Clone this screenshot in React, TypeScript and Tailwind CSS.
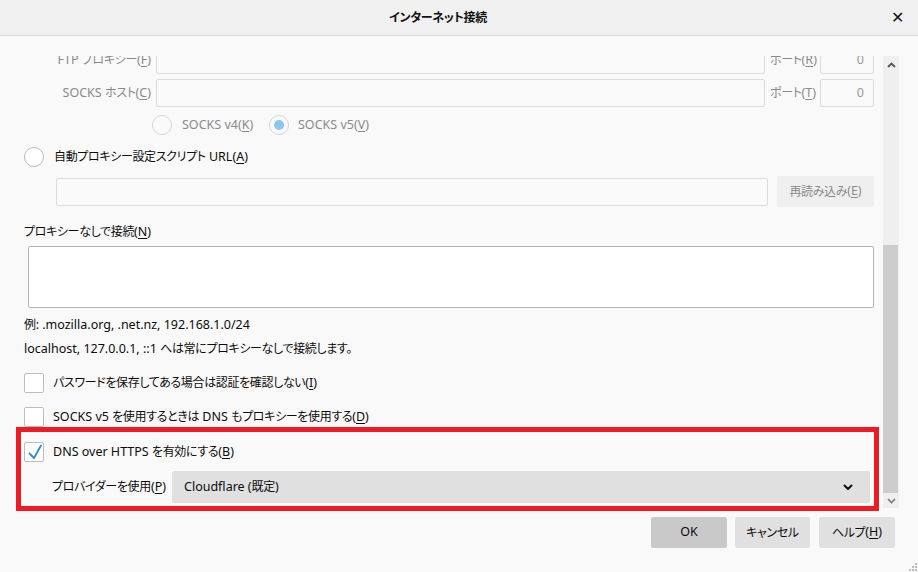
import React from "react";

const font = { fontFamily: '"Noto Sans", "Noto Sans CJK JP", sans-serif' };

function M({ c }: { c: string }) {
  return (
    <>
      (<u className="underline-offset-2">{c}</u>)
    </>
  );
}

function J({ children }: { children: React.ReactNode }) {
  return <span className="text-[12px] tracking-[-0.35px]">{children}</span>;
}

function Radio({ checked, disabled }: { checked?: boolean; disabled?: boolean }) {
  return (
    <div
      className={`w-[20px] h-[20px] rounded-full border flex items-center justify-center shrink-0 ${
        disabled ? "border-[#d6d6d6] bg-[#fafafa]" : "border-[#b9b9b9] bg-white"
      }`}
    >
      {checked && <div className="w-[10px] h-[10px] rounded-full bg-[#8cc6ea]" />}
    </div>
  );
}

function Check({ checked }: { checked?: boolean }) {
  return (
    <div className="relative w-[20px] h-[20px] rounded-[2px] border border-[#bdbdbd] bg-white shrink-0">
      {checked && (
        <svg className="absolute left-[2px] top-[0px]" width="16" height="18" viewBox="0 0 16 18">
          <path d="M2.5 10.5 L7 15 L14 2.5" fill="none" stroke="#2a8ad6" strokeWidth="1.8" strokeLinecap="round" strokeLinejoin="round" />
        </svg>
      )}
    </div>
  );
}

export default function App() {
  return (
    <div
      className="relative w-[918px] h-[572px] bg-[#f9f9f9] overflow-hidden text-[12.5px] text-[#0c0c0d] [font-feature-settings:'palt'] whitespace-nowrap"
      style={font}
    >
      {/* title bar */}
      <div className="relative h-[36px] bg-[#f0f0f0] border-b border-[#d9d9d9] flex items-center">
        <div className="flex-1 text-center font-bold text-[12px] tracking-[-0.3px] pr-[42px] text-[#111]">インターネット接続</div>
        <div className="absolute right-[14px] top-[9px] text-[16px] text-[#111] leading-none">✕</div>
      </div>

      {/* body */}
      <div className="flex pt-[20px] pr-[19px]">
        <div className="flex-1 h-[452px] overflow-hidden pl-[24px] pr-[9px]">
          <div className="mt-[-10px]">
            {/* FTP row */}
            <div className="flex items-center h-[28px]">
              <div className="w-[128px] text-right text-[#8a8a8a] pr-[1px]">
                FTP <J>プロキシー</J><M c="F" />
              </div>
              <div className="ml-[4px] flex-1 h-[28px] border border-[#dcdcdc] rounded-[2px] bg-[#f9f9f9]" />
              <div className="ml-[5px] w-[50px] text-[#8a8a8a]">
                <J>ポート</J><M c="R" />
              </div>
              <div className="w-[54px] h-[28px] border border-[#dcdcdc] rounded-[2px] text-right pr-[9px] leading-[26px] text-[#9a9a9a]">0</div>
            </div>
            {/* SOCKS row */}
            <div className="flex items-center h-[28px] mt-[5px]">
              <div className="w-[128px] text-right text-[#8a8a8a] pr-[1px]">
                SOCKS <J>ホスト</J><M c="C" />
              </div>
              <div className="ml-[4px] flex-1 h-[28px] border border-[#dcdcdc] rounded-[2px] bg-[#f9f9f9]" />
              <div className="ml-[5px] w-[50px] text-[#8a8a8a]">
                <J>ポート</J><M c="T" />
              </div>
              <div className="w-[54px] h-[28px] border border-[#dcdcdc] rounded-[2px] text-right pr-[9px] leading-[26px] text-[#9a9a9a]">0</div>
            </div>
            {/* radio row */}
            <div className="flex items-center h-[20px] mt-[8px] pl-[128px] text-[#8a8a8a]">
              <Radio disabled />
              <span className="ml-[10px] w-[87px]">
                SOCKS v4<M c="K" />
              </span>
              <Radio disabled checked />
              <span className="ml-[9px]">
                SOCKS v5<M c="V" />
              </span>
            </div>
            {/* auto proxy */}
            <div className="flex items-center h-[20px] mt-[12px]">
              <Radio />
              <span className="ml-[10px]">
                <J>自動プロキシー設定スクリプト</J> URL<M c="A" />
              </span>
            </div>
            <div className="flex items-center h-[31px] mt-[9px] pl-[32px]">
              <div className="flex-1 h-[28px] border border-[#dcdcdc] rounded-[2px]" />
              <div className="ml-[9px] w-[97px] h-[31px] bg-[#efefef] rounded-[2px] flex items-center justify-center text-[#8a8a8a]">
                <J>再読み込み</J><M c="E" />
              </div>
            </div>
            {/* no proxy */}
            <div className="h-[18px] mt-[16px] flex items-center">
              <J>プロキシーなしで接続</J><M c="N" />
            </div>
            <div className="mt-[5px] ml-[4px] h-[62px] bg-white border border-[#b3b3b3] rounded-[2px]" />
            <div className="h-[16px] mt-[9px] flex items-center">
              <J>例</J>: .mozilla.org, .net.nz, 192.168.1.0/24
            </div>
            <div className="h-[16px] mt-[8px] flex items-center">
              localhost, 127.0.0.1, ::1&nbsp;<J>へは常にプロキシーなしで接続します。</J>
            </div>
            <div className="flex items-center h-[20px] mt-[16px]">
              <Check />
              <span className="ml-[9px]">
                <J>パスワードを保存してある場合は認証を確認しない</J><M c="I" />
              </span>
            </div>
            <div className="flex items-center h-[20px] mt-[14px]">
              <Check />
              <span className="ml-[9px]">
                SOCKS v5 <J>を使用するときは</J> DNS <J>もプロキシーを使用する</J><M c="D" />
              </span>
            </div>
            <div className="flex items-center h-[20px] mt-[15px]">
              <Check checked />
              <span className="ml-[9px]">
                DNS over HTTPS <J>を有効にする</J><M c="B" />
              </span>
            </div>
            <div className="flex items-center h-[32px] mt-[9px] pl-[28px] pr-[4px]">
              <span className="w-[111px]">
                <J>プロバイダーを使用</J><M c="P" />
              </span>
              <div className="ml-[9px] flex-1 h-[32px] bg-[#e0e0e0] rounded-[2px] flex items-center pl-[12px] pr-[17px]">
                <span className="flex-1">
                  Cloudflare (<J>既定</J>)
                </span>
                <svg width="10" height="7" viewBox="0 0 10 7">
                  <path d="M1.5 1.5 L5 5 L8.5 1.5" fill="none" stroke="#111" strokeWidth="2" strokeLinecap="round" strokeLinejoin="round" />
                </svg>
              </div>
            </div>
          </div>
        </div>
        {/* scrollbar */}
        <div className="w-[16px] h-[452px] bg-[#efefef] flex flex-col">
          <div className="h-[18px] flex items-center justify-center">
            <svg width="9" height="6" viewBox="0 0 9 6">
              <path d="M1 5 L4.5 1.5 L8 5" fill="none" stroke="#555" strokeWidth="1.8" />
            </svg>
          </div>
          <div className="h-[171px]" />
          <div className="h-[248px] bg-[#cdcdcd] mr-[1px]" />
          <div className="flex-1 flex items-center justify-center">
            <svg width="9" height="6" viewBox="0 0 9 6">
              <path d="M1 1 L4.5 4.5 L8 1" fill="none" stroke="#7a7a7a" strokeWidth="1.6" />
            </svg>
          </div>
        </div>
      </div>

      {/* buttons */}
      <div className="flex justify-end mt-[9px] pr-[23px] gap-[8px]">
        <div className="w-[76px] h-[31px] bg-[#c9c9c9] rounded-[2px] flex items-center justify-center">OK</div>
        <div className="w-[75px] h-[31px] bg-[#e0e0e0] rounded-[2px] flex items-center justify-center">
          <J>キャンセル</J>
        </div>
        <div className="w-[76px] h-[31px] bg-[#e0e0e0] rounded-[2px] flex items-center justify-center ml-[1px]">
          <J>ヘルプ</J><M c="H" />
        </div>
      </div>

      {/* resize grip */}
      <svg className="absolute right-[1px] bottom-[1px]" width="8" height="8" viewBox="0 0 8 8">
        <rect x="6" y="0" width="2" height="2" fill="#bbb" />
        <rect x="3" y="3" width="2" height="2" fill="#bbb" />
        <rect x="6" y="3" width="2" height="2" fill="#bbb" />
        <rect x="0" y="6" width="2" height="2" fill="#bbb" />
        <rect x="3" y="6" width="2" height="2" fill="#bbb" />
        <rect x="6" y="6" width="2" height="2" fill="#bbb" />
      </svg>

      {/* red annotation box */}
      <div className="absolute left-[16px] top-[427px] w-[863px] h-[84px] border-[5px] border-[#ed1c24] pointer-events-none" />
    </div>
  );
}
